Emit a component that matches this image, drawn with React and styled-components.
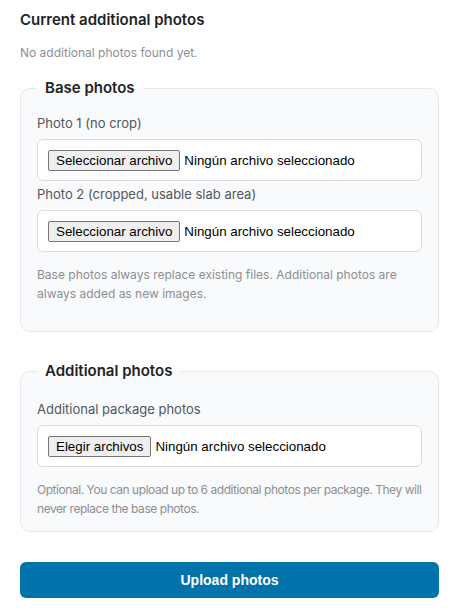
import React from 'react'
import styled, { createGlobalStyle } from 'styled-components'

const GlobalStyle = createGlobalStyle`
  body {
    margin: 0;
    background: #ffffff;
    font-family: Inter, "Open Sans", sans-serif;
  }
`

const Page = styled.div`
  padding: 10px 16px 18px 20px;
  width: 419px;
`

const Title = styled.h2`
  margin: 0;
  font-size: 15px;
  line-height: 20px;
  font-weight: 600;
  color: #1d2327;
`

const Empty = styled.p`
  margin: 14px 0 16px;
  font-size: 12px;
  line-height: 18px;
  color: #8c8f94;
`

const Group = styled.fieldset`
  margin: 0 0 ${(p) => p.$after}px;
  padding: 8px 16px ${(p) => p.$bottom}px;
  border: 1px solid #e6e9ee;
  border-radius: 10px;
  background: #f9fafb;
`

const Legend = styled.legend`
  padding: 0 8px;
  font-size: 15px;
  line-height: 20px;
  font-weight: 600;
  color: #1d2327;
`

const Label = styled.label`
  display: block;
  margin: ${(p) => p.$top}px 0 5px;
  font-size: 13px;
  line-height: 22px;
  color: #50575e;
`

const FileBox = styled.label`
  display: flex;
  align-items: center;
  height: 40px;
  padding: 0 10px;
  border: 1px solid #dcdcde;
  border-radius: 6px;
  background: #ffffff;
  font-family: Arial, "Liberation Sans", sans-serif;
  font-size: 13.333px;
  color: #000000;
  cursor: pointer;
`

const HiddenInput = styled.input`
  display: none;
`

const PickButton = styled.span`
  display: inline-flex;
  align-items: center;
  height: 21px;
  padding: 0 7px;
  margin-right: 4px;
  box-sizing: border-box;
  border: 1px solid #767676;
  border-radius: 2px;
  background: #efefef;
`

const Help = styled.p`
  margin: 13px 0 0;
  font-size: 12px;
  line-height: 19px;
  color: #8c8f94;
  letter-spacing: ${(p) => (p.$tight ? '-0.45px' : '0')};
`

const Submit = styled.button`
  display: block;
  width: 100%;
  height: 36px;
  border: none;
  border-radius: 6px;
  background: #0073aa;
  color: #ffffff;
  font-family: Arial, "Liberation Sans", sans-serif;
  font-size: 14px;
  font-weight: 700;
  cursor: pointer;
`

function FilePicker({ button, multiple }) {
  return (
    <FileBox>
      <HiddenInput type="file" multiple={multiple} />
      <PickButton>{button}</PickButton>
      <span>Ningún archivo seleccionado</span>
    </FileBox>
  )
}

export default function App() {
  return (
    <Page>
      <GlobalStyle />
      <Title>Current additional photos</Title>
      <Empty>No additional photos found yet.</Empty>

      <Group $after={29} $bottom={28}>
        <Legend>Base photos</Legend>
        <Label $top={6}>Photo 1 (no crop)</Label>
        <FilePicker button="Seleccionar archivo" />
        <Label $top={2}>Photo 2 (cropped, usable slab area)</Label>
        <FilePicker button="Seleccionar archivo" />
        <Help>
          Base photos always replace existing files. Additional photos are always added as new images.
        </Help>
      </Group>

      <Group $after={30} $bottom={13}>
        <Legend>Additional photos</Legend>
        <Label $top={9}>Additional package photos</Label>
        <FilePicker button="Elegir archivos" multiple />
        <Help $tight>
          Optional. You can upload up to 6 additional photos per package. They will never replace the base photos.
        </Help>
      </Group>

      <Submit type="button">Upload photos</Submit>
    </Page>
  )
}
